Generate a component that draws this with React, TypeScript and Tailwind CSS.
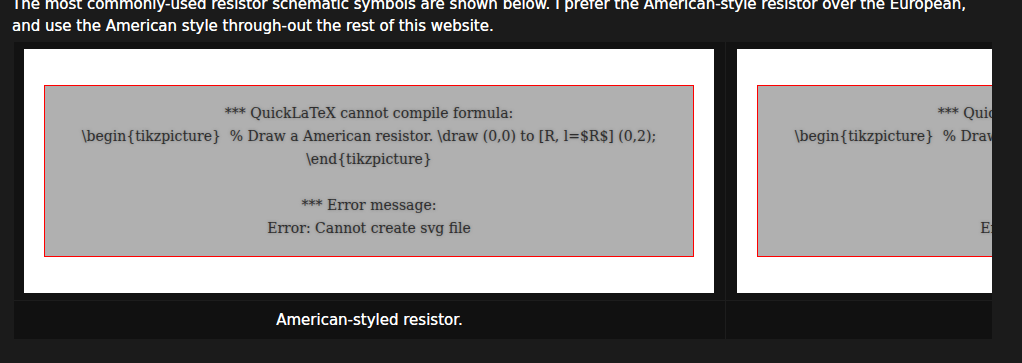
const ErrorBox = () => {
  return (
    <div className="w-[650px] h-[172px] bg-[#b0b0b0] border border-[#ff0000] flex flex-col justify-center items-center text-center text-[14px] leading-[23px] text-[#2e2e2e] whitespace-pre [font-family:'DejaVu_Serif',serif] [text-shadow:0_0_3px_#7a7a7a]">
      <p>*** QuickLaTeX cannot compile formula:</p>
      <p>{"\\begin{tikzpicture}  % Draw a American resistor. \\draw (0,0) to [R, l=$R$] (0,2);"}</p>
      <p>{"\\end{tikzpicture}"}</p>
      <p>&nbsp;</p>
      <p>*** Error message:</p>
      <p>Error: Cannot create svg file</p>
    </div>
  );
};

const Figure = () => {
  return (
    <div className="w-[690px] h-[244px] bg-white px-5 py-9 shrink-0">
      <ErrorBox />
    </div>
  );
};

export default function App() {
  return (
    <div className="w-[1022px] h-[363px] bg-[#1b1b1b] overflow-hidden [font-family:'DejaVu_Sans',sans-serif]">
      <p className="px-3 -mt-[7px] text-[15px] leading-[22px] text-white [text-shadow:0_0_0.4px_#fff]">
        The most commonly-used resistor schematic symbols are shown below. I prefer the American-style resistor over the European,
        <br />
        and use the American style through-out the rest of this website.
      </p>
      <div className="ml-[14px] mt-[5px] w-[978px] overflow-hidden">
        <div className="grid grid-cols-[711px_711px] gap-px bg-[#1d1d1d] w-max">
          <div className="bg-[#121212] px-[10px] py-[7px]">
            <Figure />
          </div>
          <div className="bg-[#121212] pl-[11px] pr-[10px] py-[7px]">
            <Figure />
          </div>
          <div className="bg-[#111111] h-[38px] flex items-center justify-center text-white text-[15px] [text-shadow:0_0_0.4px_#fff]">
            American-styled resistor.
          </div>
          <div className="bg-[#111111] h-[38px]"></div>
        </div>
      </div>
    </div>
  );
}
